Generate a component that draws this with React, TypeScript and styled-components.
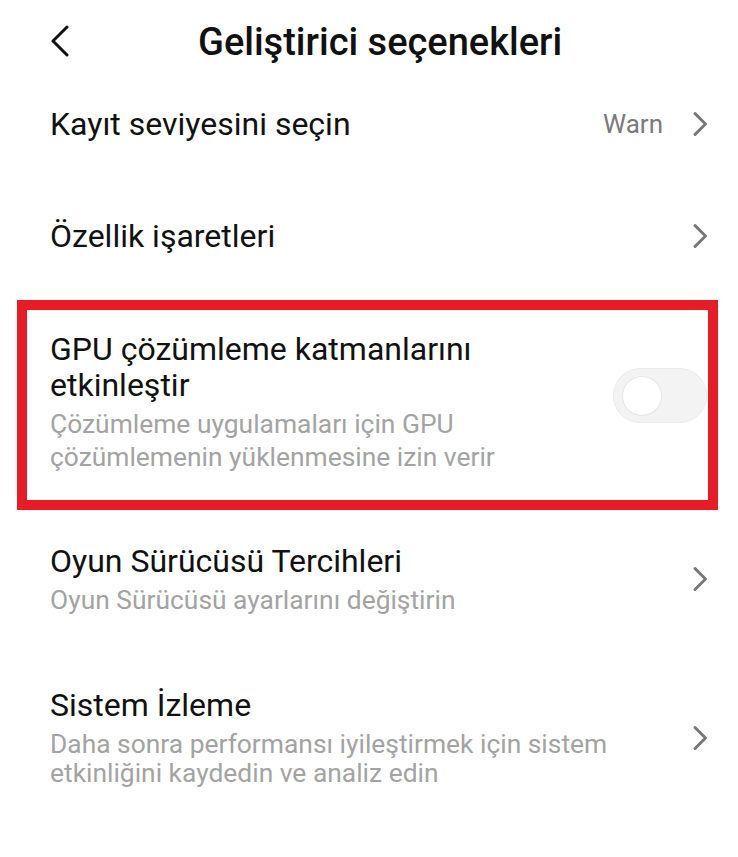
import styled, { createGlobalStyle } from "styled-components";

const GlobalStyle = createGlobalStyle`
  html, body {
    margin: 0;
    padding: 0;
    background: #ffffff;
  }
  body {
    font-family: Roboto, "Noto Sans", "Liberation Sans", sans-serif;
    -webkit-font-smoothing: antialiased;
  }
  * {
    box-sizing: border-box;
  }
`;

const Page = styled.div`
  width: 738px;
  min-height: 857px;
  background: #ffffff;
  display: flex;
  flex-direction: column;
`;

const Header = styled.div`
  height: 82px;
  display: flex;
  flex-direction: row;
  align-items: center;
  padding-left: 50px;
`;

const BackBtn = styled.div`
  width: 22px;
  height: 32px;
  display: flex;
  align-items: center;
  justify-content: flex-start;
`;

const Title = styled.div`
  margin-left: 126px;
  margin-top: 2px;
  font-size: 38px;
  font-weight: 500;
  color: #111111;
  line-height: 44px;
`;

const Row = styled.div<{ $pt: number; $pb: number }>`
  display: flex;
  flex-direction: row;
  align-items: center;
  justify-content: space-between;
  padding: ${({ $pt }) => $pt}px 30px ${({ $pb }) => $pb}px 50px;
`;

const TextBlock = styled.div`
  display: flex;
  flex-direction: column;
  flex: 1;
`;

const RowTitle = styled.div`
  font-size: 32px;
  line-height: 36px;
  color: #111111;
`;

const RowSub = styled.div<{ $mt: number; $lh: number }>`
  margin-top: ${({ $mt }) => $mt}px;
  font-size: 26.4px;
  line-height: ${({ $lh }) => $lh}px;
  color: #a3a3a3;
`;

const Trailing = styled.div`
  display: flex;
  flex-direction: row;
  align-items: center;
  gap: 29px;
`;

const Value = styled.div`
  font-size: 26px;
  color: #7a7a7a;
`;

const Highlight = styled.div`
  margin: 0 20px 0 17px;
  height: 210px;
  border: 10px solid #e81c27;
  padding: 21px 1px 0 23px;
  display: flex;
  flex-direction: row;
  align-items: flex-start;
`;

const HighlightText = styled(TextBlock)`
  padding-right: 20px;
`;

const Track = styled.div`
  margin-top: 37px;
  width: 94px;
  height: 55px;
  border-radius: 28px;
  background: #f3f3f3;
  box-shadow: inset 0 0 0 1px #ececec;
  display: flex;
  align-items: center;
  padding-left: 10px;
`;

const Thumb = styled.div`
  width: 38px;
  height: 38px;
  border-radius: 50%;
  background: #ffffff;
  box-shadow: 0 0 0 1px #e6e6e6;
`;

const Chevron = () => (
  <svg width="16" height="26" viewBox="0 0 16 26">
    <polyline
      points="3,2.5 13.5,13 3,23.5"
      fill="none"
      stroke="#777777"
      strokeWidth="3"
      strokeLinecap="round"
      strokeLinejoin="round"
    />
  </svg>
);

const BackIcon = () => (
  <svg width="20" height="32" viewBox="0 0 20 32">
    <polyline
      points="17,2 3,16 17,30"
      fill="none"
      stroke="#111111"
      strokeWidth="3"
      strokeLinecap="round"
      strokeLinejoin="round"
    />
  </svg>
);

export default function App() {
  return (
    <Page>
      <GlobalStyle />
      <Header>
        <BackBtn>
          <BackIcon />
        </BackBtn>
        <Title>Geliştirici seçenekleri</Title>
      </Header>

      <Row $pt={24} $pb={20}>
        <TextBlock>
          <RowTitle>Kayıt seviyesini seçin</RowTitle>
        </TextBlock>
        <Trailing>
          <Value>Warn</Value>
          <Chevron />
        </Trailing>
      </Row>

      <Row $pt={56} $pb={46}>
        <TextBlock>
          <RowTitle>Özellik işaretleri</RowTitle>
        </TextBlock>
        <Chevron />
      </Row>

      <Highlight>
        <HighlightText>
          <RowTitle>
            GPU çözümleme katmanlarını
            <br />
            etkinleştir
          </RowTitle>
          <RowSub $mt={5} $lh={33}>
            Çözümleme uygulamaları için GPU
            <br />
            çözümlemenin yüklenmesine izin verir
          </RowSub>
        </HighlightText>
        <Track>
          <Thumb />
        </Track>
      </Highlight>

      <Row $pt={33} $pb={30}>
        <TextBlock>
          <RowTitle>Oyun Sürücüsü Tercihleri</RowTitle>
          <RowSub $mt={6} $lh={30}>
            Oyun Sürücüsü ayarlarını değiştirin
          </RowSub>
        </TextBlock>
        <Chevron />
      </Row>

      <Row $pt={42} $pb={30}>
        <TextBlock>
          <RowTitle>Sistem İzleme</RowTitle>
          <RowSub $mt={7} $lh={29}>
            Daha sonra performansı iyileştirmek için sistem
            <br />
            etkinliğini kaydedin ve analiz edin
          </RowSub>
        </TextBlock>
        <Chevron />
      </Row>
    </Page>
  );
}
